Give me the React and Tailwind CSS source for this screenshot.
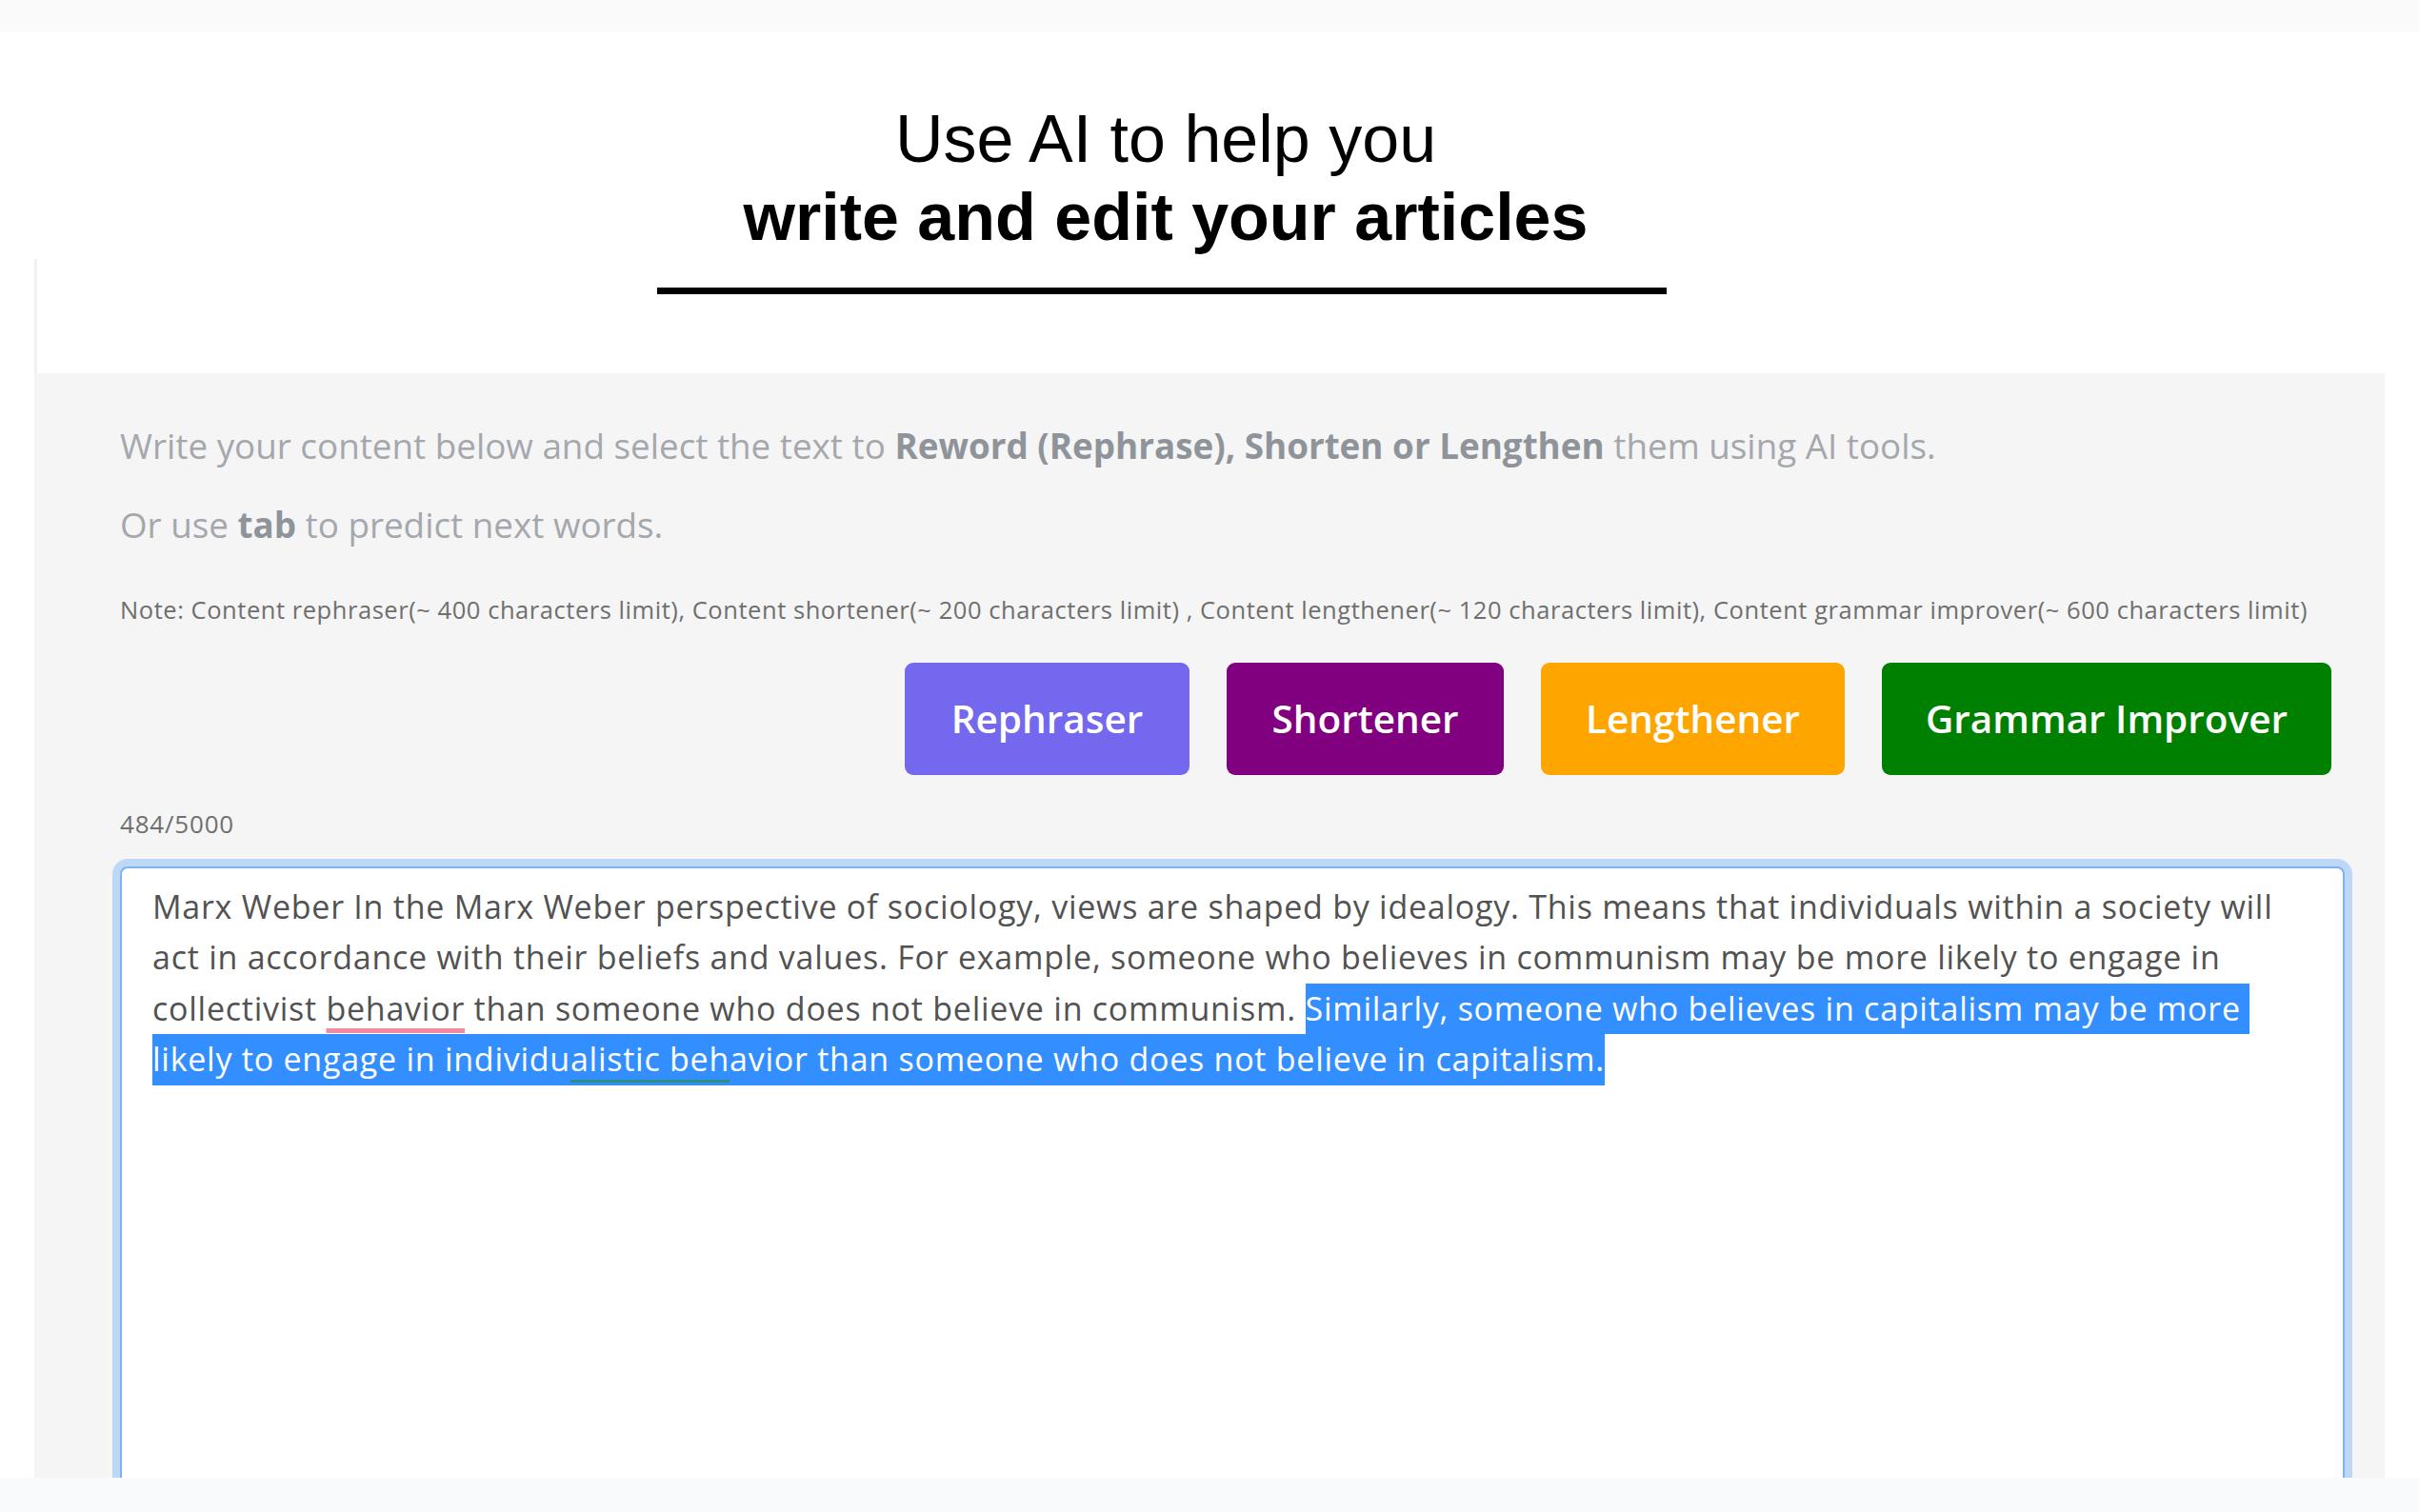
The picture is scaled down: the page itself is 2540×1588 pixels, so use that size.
import React from "react";

// AI writing helper page

const buttons = [
  { label: "Rephraser", cls: "w-[299px] bg-[#7468ee]" },
  { label: "Shortener", cls: "w-[291px] bg-[#800080]" },
  { label: "Lengthener", cls: "w-[319px] bg-[#ffa500]" },
  { label: "Grammar Improver", cls: "w-[472px] bg-[#008000]" },
];

const Highlight = ({ children }) => (
  <span className="inline-block bg-[#338fff] text-white leading-[53.4px]">{children}</span>
);

const App = () => {
  return (
    <div className="min-h-screen bg-white flex flex-col">
      {/* faint top strip */}
      <div className="h-[33px] bg-[#fafafa]"></div>

      {/* title */}
      <div className="pr-[92px] mt-[72px] text-center text-black font-['Liberation_Sans',Arial,sans-serif] text-[70px] leading-[82px]">
        <h1 className="font-normal">Use AI to help you</h1>
        <h2 className="font-bold">write and edit your articles</h2>
      </div>

      <div className="mt-[3px] mx-[36px] h-[120px] border-l-[3px] border-[#f1f1f1]">
        <div className="ml-[651px] mt-[30px] w-[1060px] h-[7px] bg-black"></div>
      </div>

      {/* editor panel */}
      <div className="mx-[36px] h-[1160px] overflow-hidden bg-[#f5f5f5] pl-[90px] pr-[42px] pt-[52px] font-['Open_Sans',sans-serif]">
        <p className="text-[36.8px] leading-[48px] text-[#a4a8ae] whitespace-nowrap">
          Write your content below and select the text to{" "}
          <b className="font-bold text-[#8f949b]">Reword (Rephrase), Shorten or Lengthen</b> them using AI tools.
        </p>
        <p className="mt-[35px] text-[36.8px] leading-[48px] text-[#a4a8ae]">
          Or use <b className="font-bold text-[#8f949b]">tab</b> to predict next words.
        </p>

        <p className="mt-[48px] text-[25.5px] tracking-[0.55px] leading-[34px] text-[#6f6f6f] whitespace-nowrap">
          Note: Content rephraser(~ 400 characters limit), Content shortener(~ 200 characters limit) , Content lengthener(~ 120 characters limit), Content grammar improver(~ 600 characters limit)
        </p>

        <div className="mt-[39px] pr-[14px] flex justify-end gap-[39px]">
          {buttons.map((b) => (
            <button
              key={b.label}
              className={`${b.cls} h-[118px] rounded-[9px] text-white text-[40.5px] font-semibold flex items-center justify-center`}
            >
              {b.label}
            </button>
          ))}
        </div>

        <div className="mt-[34px] text-[26px] tracking-[0.8px] leading-[34px] text-[#6f6f6f]">484/5000</div>

        {/* text box */}
        <div className="mt-[28px] h-[700px] bg-white rounded-[8px] border-2 border-[#7fb2f2] shadow-[0_0_0_8px_#bdd8f7] pl-[32px] pt-[14px] text-[34px] tracking-[0.75px] leading-[53.4px] text-[#525252] whitespace-nowrap">
          <div>
            Marx Weber In the Marx Weber perspective of sociology, views are shaped by idealogy. This means that individuals within a society will
          </div>
          <div>
            act in accordance with their beliefs and values. For example, someone who believes in communism may be more likely to engage in
          </div>
          <div>
            collectivist{" "}
            <span className="underline decoration-[#f38ba0] decoration-[5px] underline-offset-[8px]">behavior</span> than someone who does not believe in communism.{" "}
            <Highlight>Similarly, someone who believes in capitalism may be more&nbsp;</Highlight>
          </div>
          <div>
            <Highlight>
              likely to engage in individu
              <span className="underline decoration-[#2a8f7d] decoration-[3px] underline-offset-[9px]">alistic beh</span>
              avior than someone who does not believe in capitalism.
            </Highlight>
          </div>
        </div>
      </div>

      {/* faint bottom strip */}
      <div className="flex-1 bg-[#f9fafb]"></div>
    </div>
  );
};

export default App;
